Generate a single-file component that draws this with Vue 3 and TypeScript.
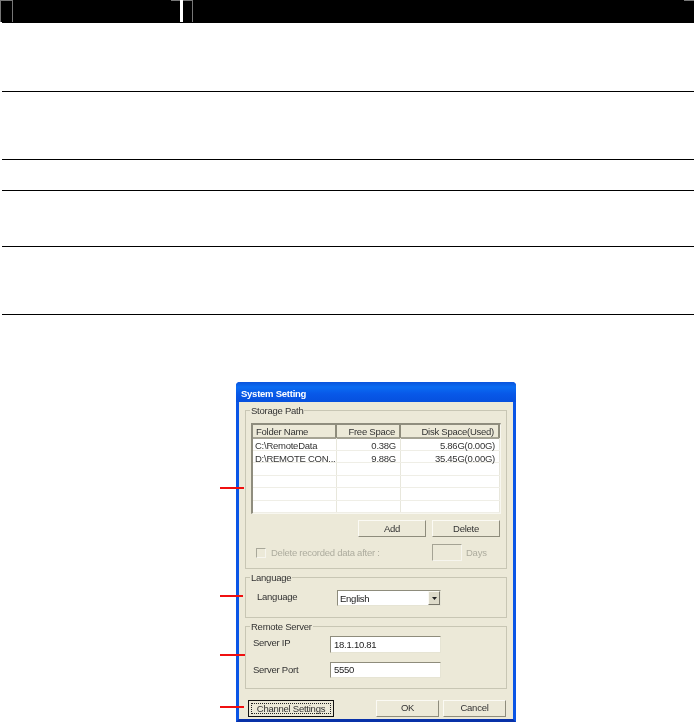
<script setup lang="ts">
interface Row {
  folder: string
  free: string
  disk: string
}
const rows: Row[] = [
  { folder: 'C:\\RemoteData', free: '0.38G', disk: '5.86G(0.00G)' },
  { folder: 'D:\\REMOTE CON...', free: '9.88G', disk: '35.45G(0.00G)' },
  { folder: '', free: '', disk: '' },
  { folder: '', free: '', disk: '' },
  { folder: '', free: '', disk: '' },
  { folder: '', free: '', disk: '' }
]
const markers = ['m1', 'm2', 'm3', 'm4']
</script>

<template>
  <div class="page">
    <div class="band">
      <span class="tab tab-a"></span>
      <span class="tab tab-b"><i class="tab-white"></i></span>
      <span class="tab-end"></span>
    </div>
    <div class="cell h1"></div>
    <div class="cell h2"></div>
    <div class="cell h3"></div>
    <div class="cell h4"></div>
    <div class="cell h5"></div>

    <div class="figure">
      <span v-for="m in markers" :key="m" class="marker" :class="m"></span>
      <section class="dialog">
        <header class="title">System Setting</header>
        <div class="body">
          <fieldset class="group storage">
            <legend>Storage Path</legend>
            <div class="storage-in">
              <div class="list">
                <div class="list-head">
                  <span class="th th-left">Folder Name</span>
                  <span class="th">Free Space</span>
                  <span class="th">Disk Space(Used)</span>
                </div>
                <div v-for="(r, i) in rows" :key="i" class="list-row">
                  <span class="td td-left">{{ r.folder }}</span>
                  <span class="td">{{ r.free }}</span>
                  <span class="td">{{ r.disk }}</span>
                </div>
              </div>
              <div class="list-actions">
                <button class="btn btn-list">Add</button>
                <button class="btn btn-list">Delete</button>
              </div>
              <div class="purge">
                <span class="check"></span>
                <span class="disabled">Delete recorded data after :</span>
                <span class="days-box"></span>
                <span class="disabled days">Days</span>
              </div>
            </div>
          </fieldset>

          <fieldset class="group language">
            <legend>Language</legend>
            <div class="lang-in">
              <span class="lang-label">Language</span>
              <div class="select">
                <span class="select-text">English</span>
                <span class="select-btn">
                  <svg width="5" height="3" viewBox="0 0 5 3"><path d="M0 0h5L2.5 3z" fill="#222" /></svg>
                </span>
              </div>
            </div>
          </fieldset>

          <fieldset class="group remote">
            <legend>Remote Server</legend>
            <div class="remote-in">
              <div class="field">
                <span class="field-label">Server IP</span>
                <span class="input">18.1.10.81</span>
              </div>
              <div class="field field-2">
                <span class="field-label">Server Port</span>
                <span class="input">5550</span>
              </div>
            </div>
          </fieldset>

          <div class="footer">
            <button class="btn btn-focus"><span class="focus-ring">Channel Settings</span></button>
            <button class="btn btn-ok">OK</button>
            <button class="btn btn-cancel">Cancel</button>
          </div>
        </div>
      </section>
    </div>
  </div>
</template>

<style>
html,
body {
  margin: 0;
  background: #fff;
}
</style>

<style scoped>
.page {
  width: 694px;
  height: 723px;
  overflow: hidden;
  background: #fff;
  font-family: "Liberation Sans", Arial, sans-serif;
}
.band {
  position: relative;
  height: 23px;
  background: #000;
  display: flex;
  align-items: flex-start;
}
.band::after {
  content: "";
  position: absolute;
  left: 0;
  bottom: 0;
  width: 2px;
  height: 1px;
  background: #fff;
}
.tab {
  display: block;
  height: 22px;
  box-sizing: border-box;
  border-top: 1px solid #777;
  border-right: 1px solid #777;
}
.tab-a {
  width: 13px;
  border-left: 1px solid #777;
}
.tab-b {
  width: 22px;
  margin-left: 158px;
  position: relative;
}
.tab-white {
  display: block;
  width: 3px;
  height: 22px;
  margin: -1px 0 0 9px;
  background: #fff;
}
.tab-end {
  width: 10px;
  height: 1px;
  margin-left: auto;
  background: #777;
}
.cell {
  margin-left: 2px;
  box-sizing: border-box;
  border-bottom: 1px solid #000;
}
.h1 { height: 69px; }
.h2 { height: 68px; }
.h3 { height: 31px; }
.h4 { height: 56px; }
.h5 { height: 68px; }

.figure {
  position: relative;
  margin: 67px 0 0 236px;
  width: 280px;
}
.marker {
  position: absolute;
  left: -16px;
  height: 2px;
  background: #f01010;
  z-index: 2;
}
.m1 { top: 105px; width: 24px; }
.m2 { top: 213px; width: 23px; }
.m3 { top: 272px; width: 25px; }
.m4 { top: 324px; width: 24px; }

.dialog {
  width: 280px;
  height: 340px;
  box-sizing: border-box;
  border: 3px solid #0a55e6;
  border-top: 0;
  border-bottom-color: #0831a8;
  border-radius: 4px 4px 0 0;
  background: #ece9d8;
  font-size: 9.5px;
  letter-spacing: -0.25px;
  color: #333;
  filter: blur(0.45px);
  display: flex;
  flex-direction: column;
}
.title {
  margin: 0 -3px;
  height: 20px;
  flex: none;
  box-sizing: border-box;
  padding: 5px 0 0 5px;
  line-height: 13px;
  color: #fff;
  font-size: 9.5px;
  font-weight: bold;
  background: linear-gradient(#0a53dc 0, #0a6cf2 25%, #0858e8 60%, #0650de 100%);
  border-radius: 4px 4px 0 0;
}
.body {
  flex: 1;
  padding: 2px 6px 0;
  display: flex;
  flex-direction: column;
  gap: 2px;
}
.group {
  margin: 0;
  padding: 0;
  min-width: 0;
  border: 1px solid #c8c6b4;
}
.group legend {
  margin-left: 4px;
  padding: 0 1px;
  height: 12px;
  line-height: 13px;
  font-size: 9.5px;
}
.storage { height: 165px; box-sizing: border-box; }
.language { height: 47px; box-sizing: border-box; }
.remote { height: 69px; box-sizing: border-box; }

.storage-in {
  padding: 7px 5px 0;
}
.list {
  width: 250px;
  height: 91px;
  box-sizing: border-box;
  background: #fff;
  border-top: 2px solid #8f8d7e;
  border-left: 2px solid #8f8d7e;
  border-right: 1px solid #f8f7f0;
  border-bottom: 1px solid #f8f7f0;
  overflow: hidden;
}
.list-head {
  display: grid;
  grid-template-columns: 84px 64px 99px;
  height: 13px;
  background: #ece9d8;
}
.th {
  box-sizing: border-box;
  border-right: 2px solid #8e8c7c;
  border-bottom: 2px solid #a5a394;
  padding: 1px 4px 0 0;
  text-align: right;
  line-height: 11px;
  white-space: nowrap;
}
.th-left {
  text-align: left;
  padding-left: 3px;
}
.list-row {
  display: grid;
  grid-template-columns: 84px 64px 99px;
  height: 12.5px;
  box-sizing: border-box;
  border-bottom: 1px solid #efeee6;
}
.td {
  border-right: 1px solid #e8e7dc;
  text-align: right;
  padding: 2px 4px 0 0;
  height: 11.5px;
  box-sizing: border-box;
  line-height: 11px;
  white-space: nowrap;
}
.td-left {
  text-align: left;
  padding: 2px 0 0 2px;
}
.list-actions {
  display: flex;
  justify-content: flex-end;
  gap: 6px;
  margin-top: 6px;
  padding-right: 1px;
}
.btn {
  appearance: none;
  margin: 0;
  padding: 0;
  height: 17px;
  box-sizing: border-box;
  background: #ece9d8;
  color: #333;
  font: inherit;
  letter-spacing: inherit;
  border: 1px solid;
  border-color: #fbfaf4 #8e8c7c #8e8c7c #fbfaf4;
}
.btn-list { width: 68px; }
.purge {
  display: flex;
  align-items: center;
  height: 17px;
  margin-top: 7px;
  padding-left: 5px;
  position: relative;
}
.check {
  width: 8px;
  height: 8px;
  margin-right: 5px;
  border: 1px solid;
  border-color: #a9a89a #f6f5ee #f6f5ee #a9a89a;
  box-sizing: content-box;
}
.disabled {
  color: #adac9e;
  white-space: nowrap;
}
.days-box {
  position: absolute;
  left: 181px;
  top: 0;
  width: 30px;
  height: 17px;
  box-sizing: border-box;
  border: 1px solid;
  border-color: #a5a394 #f6f5ee #f6f5ee #a5a394;
}
.days {
  position: absolute;
  left: 215px;
  top: 3px;
}
.lang-in {
  display: flex;
  align-items: flex-start;
  padding: 7px 0 0 11px;
}
.lang-label {
  width: 80px;
  line-height: 14px;
}
.select {
  display: flex;
  width: 104px;
  height: 16px;
  box-sizing: border-box;
  background: #fff;
  border-top: 1px solid #8e8c7c;
  border-left: 1px solid #8e8c7c;
  border-right: 1px solid #e6e4d4;
  border-bottom: 1px solid #e6e4d4;
}
.select-text {
  flex: 1;
  padding-left: 2px;
  line-height: 15px;
  color: #222;
}
.select-btn {
  width: 12px;
  margin: 0;
  display: flex;
  align-items: center;
  justify-content: center;
  box-sizing: border-box;
  background: #dedbca;
  border: 1px solid;
  border-color: #fbfaf4 #77756a #77756a #fbfaf4;
}
.remote-in {
  padding: 4px 0 0 7px;
}
.field {
  display: flex;
  height: 17px;
}
.field-2 {
  margin-top: 9px;
  height: 16px;
}
.field-label {
  width: 77px;
  line-height: 13px;
}
.field-2 .field-label {
  line-height: 15px;
}
.input {
  width: 111px;
  box-sizing: border-box;
  padding-left: 3px;
  line-height: 15px;
  background: #fff;
  color: #222;
  border-top: 1px solid #8e8c7c;
  border-left: 1px solid #8e8c7c;
  border-right: 1px solid #e6e4d4;
  border-bottom: 1px solid #e6e4d4;
}
.field-2 .input {
  line-height: 13px;
}
.footer {
  display: flex;
  padding: 9px 1px 0 3px;
}
.btn-focus {
  width: 86px;
  border: 1px solid #111;
  display: flex;
  align-items: center;
  justify-content: center;
  padding: 2px;
}
.focus-ring {
  display: block;
  width: 100%;
  height: 100%;
  box-sizing: border-box;
  border: 1px dotted #222;
  line-height: 9px;
  text-align: center;
}
.btn-ok {
  width: 63px;
  margin-left: auto;
  line-height: 13px;
  padding-bottom: 2px;
}
.btn-cancel {
  width: 63px;
  margin-left: 4px;
  padding-bottom: 2px;
}
</style>
